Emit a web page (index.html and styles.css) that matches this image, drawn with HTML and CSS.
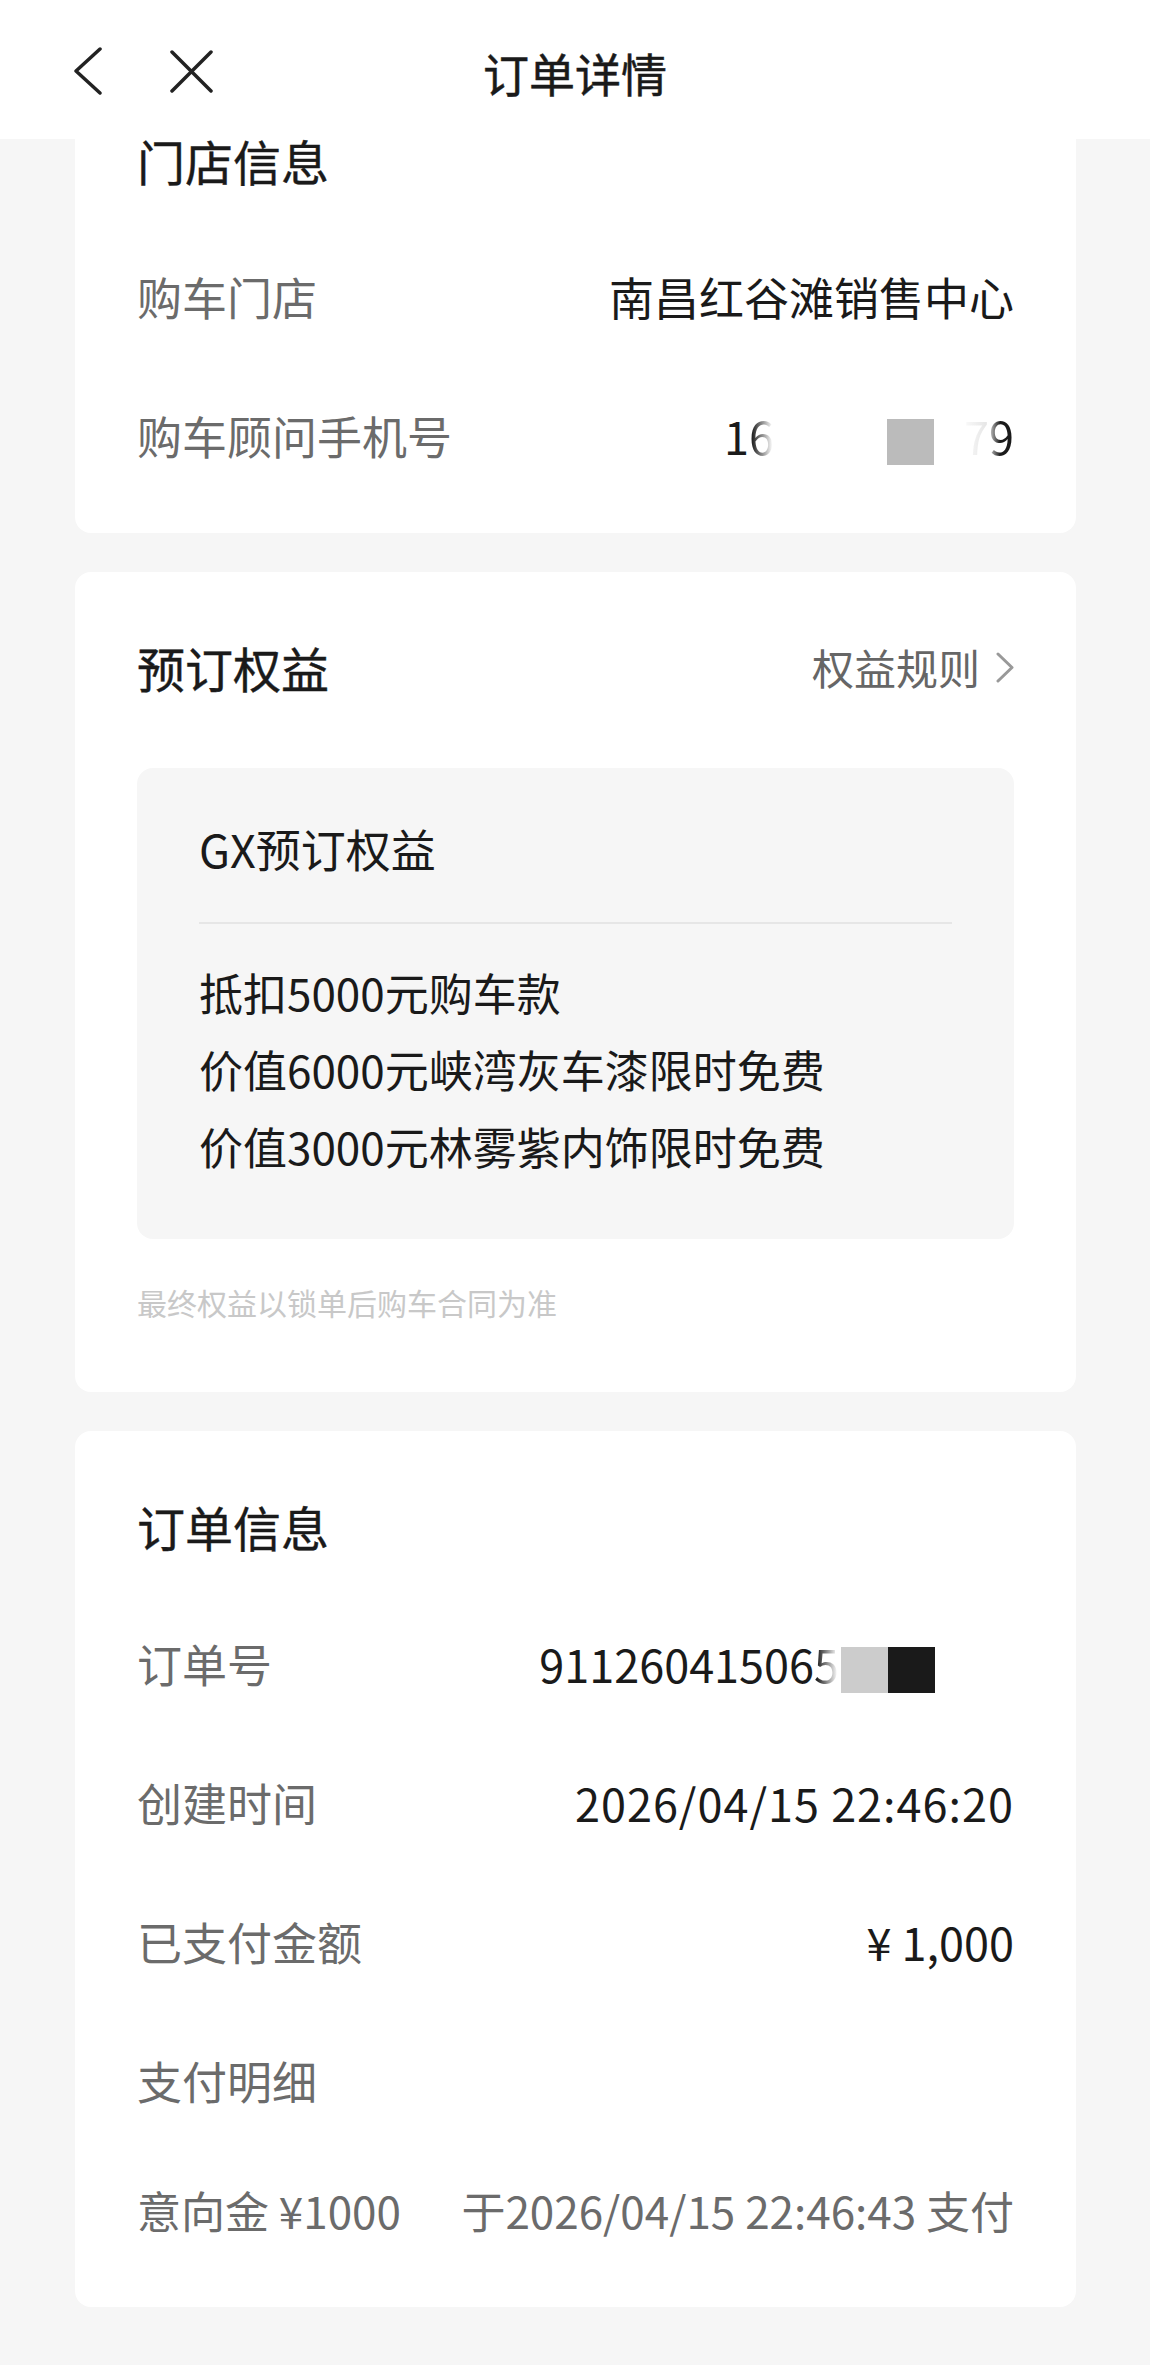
FILE: index.html
```html
<!DOCTYPE html>
<html lang="zh-CN">
<head>
    <meta charset="UTF-8">
    <meta name="viewport" content="width=device-width, initial-scale=1.0">
    <title>订单详情</title>
    <link rel="stylesheet" href="styles.css">
</head>
<body>

    <header class="topbar">
        <div class="topbar-left">
            <svg class="icon-back" viewBox="0 0 29 48" width="29" height="48">
                <polyline points="27,2 3,24 27,46" fill="none" stroke="#222" stroke-width="3.5" stroke-linecap="round" stroke-linejoin="round"/>
            </svg>
            <svg class="icon-close" viewBox="0 0 43 43" width="43" height="43">
                <path d="M2 2 L41 41 M41 2 L2 41" fill="none" stroke="#222" stroke-width="3.5" stroke-linecap="round"/>
            </svg>
        </div>
        <h1 class="topbar-title">订单详情</h1>
        <div></div>
    </header>

    <main class="page">

        <!-- store -->
        <section class="card card-cut">
            <h2 class="card-title">门店信息</h2>
            <div class="row">
                <span class="label">购车门店</span>
                <span class="value">南昌红谷滩销售中心</span>
            </div>
            <div class="row">
                <span class="label">购车顾问手机号</span>
                <span class="value masked">
                    <span>1</span><span class="fade">6</span>
                    <span class="blot blot-grey"></span>
                    <span class="fade fade-7">7</span><span class="smudge">9</span>
                </span>
            </div>
        </section>

        <!-- benefits -->
        <section class="card">
            <div class="card-head">
                <h2 class="card-title">预订权益</h2>
                <a class="rules-link" href="#">权益规则
                    <svg viewBox="0 0 18 31" width="18" height="31">
                        <polyline points="2,2 16,15.5 2,29" fill="none" stroke="#999" stroke-width="3" stroke-linecap="round" stroke-linejoin="round"/>
                    </svg>
                </a>
            </div>
            <div class="benefit-box">
                <div class="benefit-title">GX预订权益</div>
                <div class="benefit-sep"></div>
                <ul class="benefit-list">
                    <li>抵扣5000元购车款</li>
                    <li>价值6000元峡湾灰车漆限时免费</li>
                    <li>价值3000元林雾紫内饰限时免费</li>
                </ul>
            </div>
            <p class="note">最终权益以锁单后购车合同为准</p>
        </section>

        <!-- order -->
        <section class="card card-order">
            <h2 class="card-title">订单信息</h2>
            <div class="row">
                <span class="label">订单号</span>
                <span class="value masked order-no">
                    <span>91126041506</span><span class="fade">5</span>
                    <span class="blot blot-light"></span><span class="blot blot-dark"></span>
                </span>
            </div>
            <div class="row">
                <span class="label">创建时间</span>
                <span class="value value-time">2026/04/15 22:46:20</span>
            </div>
            <div class="row">
                <span class="label">已支付金额</span>
                <span class="value">¥ 1,000</span>
            </div>
            <div class="row">
                <span class="label">支付明细</span>
            </div>
            <div class="row row-detail">
                <span>意向金 ¥1000</span>
                <span>于2026/04/15 22:46:43 支付</span>
            </div>
        </section>

    </main>

</body>
</html>
```

FILE: styles.css
```css
body {
    font-family: "Noto Sans CJK SC", "Noto Sans", sans-serif;
    margin: 0;
    padding: 0;
    background-color: #f6f6f6;
    color: #1a1a1a;
}

h1, h2, p, ul {
    margin: 0;
    padding: 0;
}

/* top bar */
.topbar {
    height: 139px;
    background-color: #fff;
    display: grid;
    grid-template-columns: 1fr auto 1fr;
    align-items: center;
}

.topbar-left {
    display: flex;
    align-items: center;
    padding-left: 73px;
    padding-top: 3px;
}

.icon-close {
    margin-left: 68px;
}

.topbar-title {
    font-size: 46px;
    font-weight: 400;
    -webkit-text-stroke: 0.5px #1a1a1a;
    line-height: 1;
    padding-top: 4px;
}

/* cards */
.page {
    padding: 0 74px 58px 75px;
}

.card {
    background-color: #fff;
    border-radius: 16px;
    padding: 71px 62px 0;
    margin-bottom: 39px;
}

.card-cut {
    border-radius: 0 0 16px 16px;
    padding-top: 0;
    padding-bottom: 28px;
}

.card-cut .card-title {
    line-height: 42px;
    margin-bottom: 46px;
}

.card-title {
    font-size: 48px;
    font-weight: 400;
    -webkit-text-stroke: 0.4px #1a1a1a;
    line-height: 48px;
}

.card-order {
    padding-bottom: 37px;
}

.card-order .card-title {
    margin-bottom: 44px;
}

.row {
    height: 139px;
    display: flex;
    align-items: center;
    justify-content: space-between;
    font-size: 45px;
}

.label {
    color: #6b6b6b;
}

.value {
    color: #1a1a1a;
}

.value-time {
    letter-spacing: 1px;
}

.row-detail {
    height: 120px;
    font-size: 44px;
    color: #6b6b6b;
}

/* redacted numbers */
.masked {
    display: inline-flex;
    align-items: center;
}

.fade {
    background: linear-gradient(to right, #1a1a1a 10%, rgba(26, 26, 26, 0.05) 90%);
    -webkit-background-clip: text;
    background-clip: text;
    color: transparent;
}

.fade-7 {
    background: linear-gradient(to right, rgba(26, 26, 26, 0.02), rgba(26, 26, 26, 0.12));
    -webkit-background-clip: text;
    background-clip: text;
    margin-left: 30px;
}

.smudge {
    background: linear-gradient(to right, rgba(26, 26, 26, 0.2) 0%, #1a1a1a 45%);
    -webkit-background-clip: text;
    background-clip: text;
    color: transparent;
}

.blot {
    display: inline-block;
    width: 47px;
    height: 46px;
    margin-top: 12px;
}

.blot-grey {
    background-color: #bbb;
    margin-left: 113px;
}

.blot-light {
    background-color: #ccc;
    margin-left: 2px;
}

.blot-dark {
    background-color: #1a1a1a;
}

.order-no {
    margin-right: 79px;
}

/* benefits */
.card-head {
    display: flex;
    align-items: center;
    justify-content: space-between;
}

.rules-link {
    display: flex;
    align-items: center;
    gap: 16px;
    font-size: 42px;
    line-height: 48px;
    color: #666;
    text-decoration: none;
}

.benefit-box {
    margin-top: 77px;
    background-color: #f6f6f6;
    border-radius: 16px;
    padding: 57px 62px 54px;
}

.benefit-title {
    font-size: 45px;
    line-height: 48px;
}

.benefit-sep {
    height: 2px;
    background-color: #e6e6e6;
    margin: 49px 0 30px;
}

.benefit-list {
    list-style: none;
}

.benefit-list li {
    font-size: 44px;
    line-height: 77px;
}

.note {
    margin-top: 43px;
    font-size: 30px;
    line-height: 40px;
    color: #c8c8c8;
    padding-bottom: 70px;
}
```
